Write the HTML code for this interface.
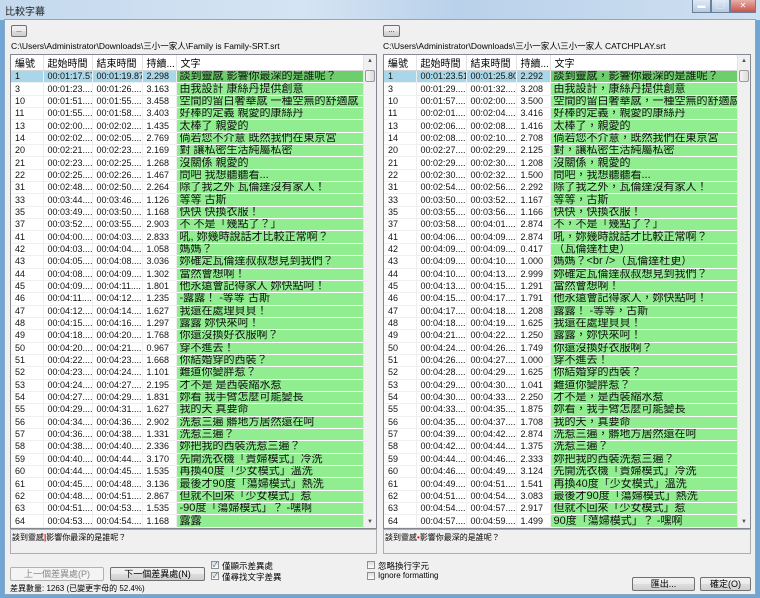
<!DOCTYPE html>
<html><head><meta charset="utf-8">
<style>
*{margin:0;padding:0;box-sizing:border-box}
body{width:760px;height:598px;overflow:hidden;background:#6fa6d6;font-family:"Liberation Sans","Noto Sans CJK TC",sans-serif;position:relative}
.title{position:absolute;left:0;top:0;width:760px;height:20px;background:linear-gradient(90deg,#c4d9ee 0%,#d5e4f3 40%,#b9d1ea 60%,#cfe0f1 100%)}
.title span{position:absolute;left:5px;top:3px;font-size:10px;color:#222}
.ctl{position:absolute;top:0;height:13px;border:1px solid #6b7f98;border-top:none;background:linear-gradient(#dfe9f5,#b5c9e0);font-size:8px;text-align:center;color:#fff;line-height:12px}
.win{position:absolute;left:4px;top:19px;width:752px;height:576px;background:#f0f0f0;border:1px solid #8ba7c6}
.a{position:absolute}
.btn{position:absolute;border:1px solid #707070;border-radius:2px;background:linear-gradient(#f2f2f2 0%,#ebebeb 50%,#dddddd 51%,#cfcfcf 100%);font-size:9px;text-align:center;color:#000}
.path{position:absolute;font-size:8.5px;color:#000;white-space:nowrap}
.box{position:absolute;border:1px solid #828790;background:#fff;overflow:hidden}
table{border-collapse:collapse;table-layout:fixed;position:absolute;left:0;top:0}
th{height:14px;font-weight:normal;font-size:10px;text-align:left;padding-left:4px;border-right:1px solid #e3e3e3;border-bottom:1px solid #d5d5d5;background:#fff;white-space:nowrap;overflow:hidden}
td{height:12.35px;font-size:9px;padding:0 0 0 4px;white-space:nowrap;overflow:hidden;border-right:1px solid #efefef;border-bottom:1px solid #efefef;line-height:11px;color:#111}
td.t{background:#90ee90;font-size:11px;border-bottom:1px solid #fff;border-right:none;padding-left:3px}
tr.s td{background:#a9d7ea}
tr.s td.t{background:#6ccf6c}
.sb{position:absolute;top:0;right:0;width:13px;height:100%;background:#f0f0f0;border-left:1px solid #e4e4e4}
.sb .up,.sb .dn{position:absolute;left:3px;font-size:6px;color:#555}
.sb .th{position:absolute;left:1px;top:15px;width:10px;height:12px;border:1px solid #999;border-radius:2px;background:linear-gradient(90deg,#f4f4f4,#dcdcdc)}
.tb{position:absolute;border:1px solid #abadb3;background:#f0f0f0;font-size:8px;padding:2px 1px}
.cb{position:absolute;width:8px;height:8px;border:1px solid #8f8f8f;background:linear-gradient(#ddd,#fff);font-size:7px;line-height:7px;color:#1f4ea0;text-align:center}
.lb{position:absolute;font-size:8.5px;white-space:nowrap}
</style></head><body>
<div class="title"><span>比較字幕</span></div>
<div class="ctl" style="left:692px;width:19px">▬</div>
<div class="ctl" style="left:711px;width:19px">▢</div>
<div class="ctl" style="left:730px;width:26px;background:linear-gradient(#e6b0a8,#c9524a)">✕</div>
<div class="win"></div>

<div class="btn" style="left:11px;top:25px;width:16px;height:12px;font-size:7px;line-height:9px">...</div>
<div class="path" style="left:11px;top:40px">C:\Users\Administrator\Downloads\三小一家人\Family is Family-SRT.srt</div>
<div class="btn" style="left:383px;top:25px;width:17px;height:12px;font-size:7px;line-height:9px">...</div>
<div class="path" style="left:383px;top:40px">C:\Users\Administrator\Downloads\三小一家人\三小一家人 CATCHPLAY.srt</div>

<div class="box" style="left:10px;top:54px;width:367px;height:475px">
<table style="width:353px"><colgroup><col style="width:32px"><col style="width:49px"><col style="width:50px"><col style="width:34px"><col style="width:188px"></colgroup>
<tr><th>編號</th><th>起始時間</th><th>結束時間</th><th>持續...</th><th>文字</th></tr>
<tr class="s"><td>1</td><td>00:01:17.57</td><td>00:01:19.87</td><td>2.298</td><td class="t">談到靈感 影響你最深的是誰呢？</td></tr>
<tr><td>3</td><td>00:01:23....</td><td>00:01:26....</td><td>3.163</td><td class="t">由我設計 康絲丹提供創意</td></tr>
<tr><td>10</td><td>00:01:51....</td><td>00:01:55....</td><td>3.458</td><td class="t">空間的留白奢華感 一種空無的舒適感</td></tr>
<tr><td>11</td><td>00:01:55....</td><td>00:01:58....</td><td>3.403</td><td class="t">好棒的定義 親愛的康絲丹</td></tr>
<tr><td>13</td><td>00:02:00....</td><td>00:02:02....</td><td>1.435</td><td class="t">太棒了 親愛的</td></tr>
<tr><td>14</td><td>00:02:02....</td><td>00:02:05....</td><td>2.769</td><td class="t">倘若您不介意 既然我們在東京宮</td></tr>
<tr><td>20</td><td>00:02:21....</td><td>00:02:23....</td><td>2.169</td><td class="t">對 讓私密生活純屬私密</td></tr>
<tr><td>21</td><td>00:02:23....</td><td>00:02:25....</td><td>1.268</td><td class="t">沒關係 親愛的</td></tr>
<tr><td>22</td><td>00:02:25....</td><td>00:02:26....</td><td>1.467</td><td class="t">問吧 我想聽聽看...</td></tr>
<tr><td>31</td><td>00:02:48....</td><td>00:02:50....</td><td>2.264</td><td class="t">除了我之外 瓦倫達沒有家人！</td></tr>
<tr><td>33</td><td>00:03:44....</td><td>00:03:46....</td><td>1.126</td><td class="t">等等 古斯</td></tr>
<tr><td>35</td><td>00:03:49....</td><td>00:03:50....</td><td>1.168</td><td class="t">快快 快換衣服！</td></tr>
<tr><td>37</td><td>00:03:52....</td><td>00:03:55....</td><td>2.903</td><td class="t">不 不是「幾點了？」</td></tr>
<tr><td>41</td><td>00:04:00....</td><td>00:04:03....</td><td>2.833</td><td class="t">吼, 妳幾時說話才比較正常啊？</td></tr>
<tr><td>42</td><td>00:04:03....</td><td>00:04:04....</td><td>1.058</td><td class="t">媽媽？</td></tr>
<tr><td>43</td><td>00:04:05....</td><td>00:04:08....</td><td>3.036</td><td class="t">妳確定瓦倫達叔叔想見到我們？</td></tr>
<tr><td>44</td><td>00:04:08....</td><td>00:04:09....</td><td>1.302</td><td class="t">當然會想啊！</td></tr>
<tr><td>45</td><td>00:04:09....</td><td>00:04:11....</td><td>1.801</td><td class="t">他永遠會記得家人 妳快點呵！</td></tr>
<tr><td>46</td><td>00:04:11....</td><td>00:04:12....</td><td>1.235</td><td class="t">-露露！ -等等 古斯</td></tr>
<tr><td>47</td><td>00:04:12....</td><td>00:04:14....</td><td>1.627</td><td class="t">我還在處理貝貝！</td></tr>
<tr><td>48</td><td>00:04:15....</td><td>00:04:16....</td><td>1.297</td><td class="t">露露 妳快來呵！</td></tr>
<tr><td>49</td><td>00:04:18....</td><td>00:04:20....</td><td>1.768</td><td class="t">你還沒換好衣服啊？</td></tr>
<tr><td>50</td><td>00:04:20....</td><td>00:04:21....</td><td>0.967</td><td class="t">穿不進去！</td></tr>
<tr><td>51</td><td>00:04:22....</td><td>00:04:23....</td><td>1.668</td><td class="t">你結婚穿的西裝？</td></tr>
<tr><td>52</td><td>00:04:23....</td><td>00:04:24....</td><td>1.101</td><td class="t">難道你變胖惹？</td></tr>
<tr><td>53</td><td>00:04:24....</td><td>00:04:27....</td><td>2.195</td><td class="t">才不是 是西裝縮水惹</td></tr>
<tr><td>54</td><td>00:04:27....</td><td>00:04:29....</td><td>1.831</td><td class="t">妳看 我手臂怎麼可能變長</td></tr>
<tr><td>55</td><td>00:04:29....</td><td>00:04:31....</td><td>1.627</td><td class="t">我的天 真要命</td></tr>
<tr><td>56</td><td>00:04:34....</td><td>00:04:36....</td><td>2.902</td><td class="t">洗惹三遍 髒地方居然還在呵</td></tr>
<tr><td>57</td><td>00:04:36....</td><td>00:04:38....</td><td>1.331</td><td class="t">洗惹三遍？</td></tr>
<tr><td>58</td><td>00:04:38....</td><td>00:04:40....</td><td>2.336</td><td class="t">妳把我的西裝洗惹三遍？</td></tr>
<tr><td>59</td><td>00:04:40....</td><td>00:04:44....</td><td>3.170</td><td class="t">先開洗衣機「貴婦模式」冷洗</td></tr>
<tr><td>60</td><td>00:04:44....</td><td>00:04:45....</td><td>1.535</td><td class="t">再換40度「少女模式」溫洗</td></tr>
<tr><td>61</td><td>00:04:45....</td><td>00:04:48....</td><td>3.136</td><td class="t">最後才90度「蕩婦模式」熱洗</td></tr>
<tr><td>62</td><td>00:04:48....</td><td>00:04:51....</td><td>2.867</td><td class="t">但就不回來「少女模式」惹</td></tr>
<tr><td>63</td><td>00:04:51....</td><td>00:04:53....</td><td>1.535</td><td class="t">-90度「蕩婦模式」？ -嘿啊</td></tr>
<tr><td>64</td><td>00:04:53....</td><td>00:04:54....</td><td>1.168</td><td class="t">露露</td></tr>
</table>
<div class="sb"><span class="up" style="top:3px">▲</span><div class="th"></div><span class="dn" style="bottom:3px">▼</span></div>
</div>

<div class="box" style="left:383px;top:54px;width:368px;height:475px">
<table style="width:354px"><colgroup><col style="width:32px"><col style="width:50px"><col style="width:50px"><col style="width:34px"><col style="width:188px"></colgroup>
<tr><th>編號</th><th>起始時間</th><th>結束時間</th><th>持續...</th><th>文字</th></tr>
<tr class="s"><td>1</td><td>00:01:23.51</td><td>00:01:25.80</td><td>2.292</td><td class="t">談到靈感，影響你最深的是誰呢？</td></tr>
<tr><td>3</td><td>00:01:29....</td><td>00:01:32....</td><td>3.208</td><td class="t">由我設計，康絲丹提供創意</td></tr>
<tr><td>10</td><td>00:01:57....</td><td>00:02:00....</td><td>3.500</td><td class="t">空間的留白奢華感，一種空無的舒適感</td></tr>
<tr><td>11</td><td>00:02:01....</td><td>00:02:04....</td><td>3.416</td><td class="t">好棒的定義，親愛的康絲丹</td></tr>
<tr><td>13</td><td>00:02:06....</td><td>00:02:08....</td><td>1.416</td><td class="t">太棒了，親愛的</td></tr>
<tr><td>14</td><td>00:02:08....</td><td>00:02:10....</td><td>2.708</td><td class="t">倘若您不介意，既然我們在東京宮</td></tr>
<tr><td>20</td><td>00:02:27....</td><td>00:02:29....</td><td>2.125</td><td class="t">對，讓私密生活純屬私密</td></tr>
<tr><td>21</td><td>00:02:29....</td><td>00:02:30....</td><td>1.208</td><td class="t">沒關係，親愛的</td></tr>
<tr><td>22</td><td>00:02:30....</td><td>00:02:32....</td><td>1.500</td><td class="t">問吧，我想聽聽看...</td></tr>
<tr><td>31</td><td>00:02:54....</td><td>00:02:56....</td><td>2.292</td><td class="t">除了我之外，瓦倫達沒有家人！</td></tr>
<tr><td>33</td><td>00:03:50....</td><td>00:03:52....</td><td>1.167</td><td class="t">等等，古斯</td></tr>
<tr><td>35</td><td>00:03:55....</td><td>00:03:56....</td><td>1.166</td><td class="t">快快，快換衣服！</td></tr>
<tr><td>37</td><td>00:03:58....</td><td>00:04:01....</td><td>2.874</td><td class="t">不，不是「幾點了？」</td></tr>
<tr><td>41</td><td>00:04:06....</td><td>00:04:09....</td><td>2.874</td><td class="t">吼，妳幾時說話才比較正常啊？</td></tr>
<tr><td>42</td><td>00:04:09....</td><td>00:04:09....</td><td>0.417</td><td class="t">（瓦倫達杜更）</td></tr>
<tr><td>43</td><td>00:04:09....</td><td>00:04:10....</td><td>1.000</td><td class="t">媽媽？&lt;br /&gt;（瓦倫達杜更）</td></tr>
<tr><td>44</td><td>00:04:10....</td><td>00:04:13....</td><td>2.999</td><td class="t">妳確定瓦倫達叔叔想見到我們？</td></tr>
<tr><td>45</td><td>00:04:13....</td><td>00:04:15....</td><td>1.291</td><td class="t">當然會想啊！</td></tr>
<tr><td>46</td><td>00:04:15....</td><td>00:04:17....</td><td>1.791</td><td class="t">他永遠會記得家人，妳快點呵！</td></tr>
<tr><td>47</td><td>00:04:17....</td><td>00:04:18....</td><td>1.208</td><td class="t">露露！ -等等，古斯</td></tr>
<tr><td>48</td><td>00:04:18....</td><td>00:04:19....</td><td>1.625</td><td class="t">我還在處理貝貝！</td></tr>
<tr><td>49</td><td>00:04:21....</td><td>00:04:22....</td><td>1.250</td><td class="t">露露，妳快來呵！</td></tr>
<tr><td>50</td><td>00:04:24....</td><td>00:04:26....</td><td>1.749</td><td class="t">你還沒換好衣服啊？</td></tr>
<tr><td>51</td><td>00:04:26....</td><td>00:04:27....</td><td>1.000</td><td class="t">穿不進去！</td></tr>
<tr><td>52</td><td>00:04:28....</td><td>00:04:29....</td><td>1.625</td><td class="t">你結婚穿的西裝？</td></tr>
<tr><td>53</td><td>00:04:29....</td><td>00:04:30....</td><td>1.041</td><td class="t">難道你變胖惹？</td></tr>
<tr><td>54</td><td>00:04:30....</td><td>00:04:33....</td><td>2.250</td><td class="t">才不是，是西裝縮水惹</td></tr>
<tr><td>55</td><td>00:04:33....</td><td>00:04:35....</td><td>1.875</td><td class="t">妳看，我手臂怎麼可能變長</td></tr>
<tr><td>56</td><td>00:04:35....</td><td>00:04:37....</td><td>1.708</td><td class="t">我的天，真要命</td></tr>
<tr><td>57</td><td>00:04:39....</td><td>00:04:42....</td><td>2.874</td><td class="t">洗惹三遍，髒地方居然還在呵</td></tr>
<tr><td>58</td><td>00:04:42....</td><td>00:04:44....</td><td>1.375</td><td class="t">洗惹三遍？</td></tr>
<tr><td>59</td><td>00:04:44....</td><td>00:04:46....</td><td>2.333</td><td class="t">妳把我的西裝洗惹三遍？</td></tr>
<tr><td>60</td><td>00:04:46....</td><td>00:04:49....</td><td>3.124</td><td class="t">先開洗衣機「貴婦模式」冷洗</td></tr>
<tr><td>61</td><td>00:04:49....</td><td>00:04:51....</td><td>1.541</td><td class="t">再換40度「少女模式」溫洗</td></tr>
<tr><td>62</td><td>00:04:51....</td><td>00:04:54....</td><td>3.083</td><td class="t">最後才90度「蕩婦模式」熱洗</td></tr>
<tr><td>63</td><td>00:04:54....</td><td>00:04:57....</td><td>2.917</td><td class="t">但就不回來「少女模式」惹</td></tr>
<tr><td>64</td><td>00:04:57....</td><td>00:04:59....</td><td>1.499</td><td class="t">90度「蕩婦模式」？ -嘿啊</td></tr>
</table>
<div class="sb"><span class="up" style="top:3px">▲</span><div class="th"></div><span class="dn" style="bottom:3px">▼</span></div>
</div>

<div class="tb" style="left:10px;top:529px;width:367px;height:25px">談到靈感<span style="color:#e00;font-weight:bold">|</span>影響你最深的是誰呢？</div>
<div class="tb" style="left:383px;top:529px;width:368px;height:25px">談到靈感<span style="color:#e00">•</span>影響你最深的是誰呢？</div>

<div class="btn" style="left:10px;top:567px;width:94px;height:14px;line-height:12px;color:#888;background:#f4f4f4;border-color:#adb2b5">上一個差異處(P)</div>
<div class="btn" style="left:110px;top:567px;width:95px;height:14px;line-height:12px">下一個差異處(N)</div>
<div class="cb" style="left:211px;top:561px">✓</div><div class="lb" style="left:222px;top:560px">僅顯示差異處</div>
<div class="cb" style="left:211px;top:572px">✓</div><div class="lb" style="left:222px;top:571px">僅尋找文字差異</div>
<div class="cb" style="left:367px;top:561px"></div><div class="lb" style="left:378px;top:560px">忽略換行字元</div>
<div class="cb" style="left:367px;top:572px"></div><div class="lb" style="left:378px;top:571px;font-size:8px">Ignore formatting</div>
<div class="lb" style="left:10px;top:583px;font-size:8px">差異數量: 1263 (已變更字母的 52.4%)</div>
<div class="btn" style="left:632px;top:577px;width:63px;height:14px;line-height:12px">匯出...</div>
<div class="btn" style="left:700px;top:577px;width:51px;height:14px;line-height:12px">確定(O)</div>
</body></html>
